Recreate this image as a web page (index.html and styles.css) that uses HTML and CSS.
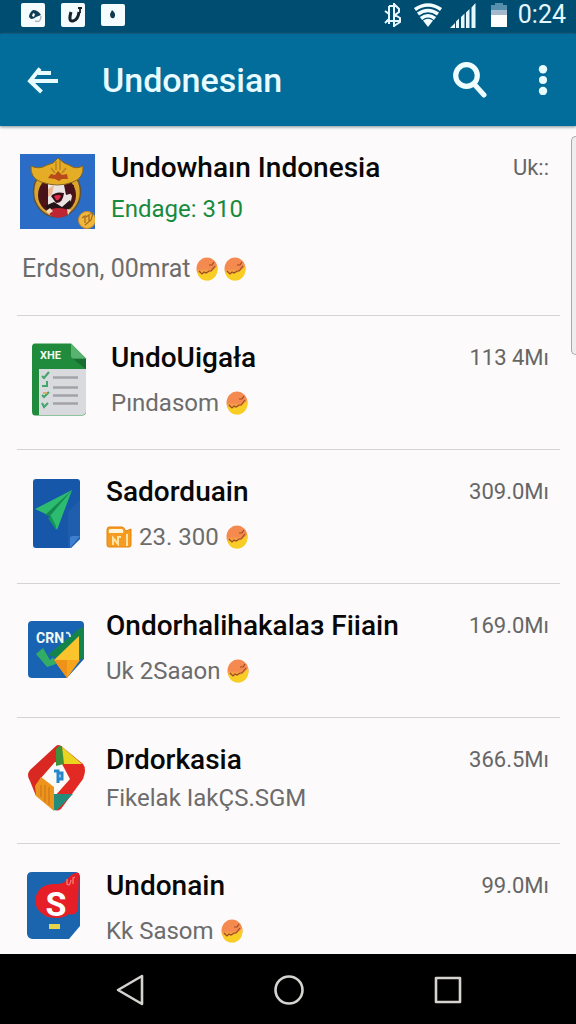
FILE: index.html
```html
<!DOCTYPE html>
<html lang="id">
<head>
<meta charset="utf-8">
<meta name="viewport" content="width=device-width, initial-scale=1">
<title>Undonesian</title>
<link rel="stylesheet" href="styles.css">
</head>
<body>
<svg class="defs" aria-hidden="true">
  <defs>
    <linearGradient id="coinFill" x1="0" y1="0" x2="0" y2="1">
      <stop offset="0.5" stop-color="#f58a50"/><stop offset="0.75" stop-color="#f9cc2c"/>
    </linearGradient>
    <symbol id="coin" viewBox="0 0 22 24">
      <ellipse cx="11" cy="12" rx="10.5" ry="11.5" fill="url(#coinFill)"/>
      <path d="M1 14Q4 20 11 17T21 9Q23 20 14 23Q3 25 1 14Z" fill="#f8ce24"/>
      <path d="M3 14l3 3 2-2 2 1 3-2 2 0 4-5M13 8l3 0 2-3" fill="none" stroke="#9a4a20" stroke-width="1.200"/>
    </symbol>
  </defs>
</svg>
<div class="screen">
  <div class="status">
    <div class="status-group notices">
      <svg width="24" height="24" viewBox="0 0 24 24"><rect width="24" height="24" rx="2" fill="#f4fcfe"/><path d="M8 14Q8 10 12 7Q17 7 20 12L15 14Q13 16 10 16Z" fill="#123d56"/><path d="M12 10l2 1-1 3-2-1z" fill="#fff"/><path d="M14 18Q20 20 20 13" fill="none" stroke="#a9b5bb" stroke-width="1.4"/></svg>
      <svg width="24" height="24" viewBox="0 0 24 24"><rect width="24" height="24" rx="2" fill="#f4fcfe"/><path d="M10 9Q7 19 12 18Q17 17 18 9" fill="none" stroke="#15222b" stroke-width="3"/><path d="M17 5h4M19 5v5" stroke="#15222b" stroke-width="1.8"/></svg>
      <svg width="24" height="24" viewBox="0 0 24 24"><rect width="24" height="22" y="1" rx="2" fill="#f4fcfe"/><path d="M11 7Q16 11 13 15Q9 16 9 11Z" fill="#103952"/></svg>
    </div>
    <div class="status-group">
      <svg width="18" height="26" viewBox="0 0 18 26"><path d="M1 9l4 3v5l-4 4M5 4v18M5 4h4M10 1v24M10 2l5 5v3l-4 3 5 3v4l-6 4M2 19h13" fill="none" stroke="#e5f8ff" stroke-width="2"/></svg>
      <svg class="wifi" width="30" height="24" viewBox="0 0 30 24"><path d="M15 24L10 17.500Q15 14 20 17.500Z" fill="#f2fdff"/><g fill="none" stroke="#f2fdff" stroke-width="3.600"><path d="M2 6.500Q15-2.500 28 6.500"/><path d="M5 11Q15 4 25 11"/><path d="M8 15.500Q15 10 22 15.500"/></g></svg>
      <svg class="signal" width="26" height="25" viewBox="0 0 26 25"><path d="M0 25L5 20v5zM6 25V18.500l3-3V25zM11 25V14l3.500-3.500V25zM16 25V9.500L19.500 6v19zM21.500 25V4.500L25.500 0v25z" fill="#e5f8ff"/></svg>
      <svg class="battery" width="16" height="24" viewBox="0 0 16 24"><path d="M4 0h8v2h4v6H0V2h4z" fill="#5790ae"/><path d="M0 7h16v5H0z" fill="#a5b9ce"/><path d="M0 12h16v12H0z" fill="#fff"/></svg>
      <span class="clock">0:24</span>
    </div>
  </div>

  <header class="appbar">
    <button class="icon-btn" aria-label="Back"><svg width="32" height="27" viewBox="0 0 32 27"><path d="M31 14H3M24 6H11M13 1.500L3 14l11.500 11" fill="none" stroke="#e8fbff" stroke-width="4"/></svg></button>
    <h1>Undonesian</h1>
    <button class="icon-btn" aria-label="Search"><svg width="34" height="36" viewBox="0 0 34 36"><circle cx="13.500" cy="13.500" r="10.800" fill="none" stroke="#effdff" stroke-width="5.200"/><path d="M21.500 22.500L31 33" stroke="#effdff" stroke-width="5" stroke-linecap="round"/></svg></button>
    <button class="icon-btn more" aria-label="More options"><svg width="10" height="30" viewBox="0 0 10 30"><g fill="#e8fbff"><circle cx="5" cy="4.300" r="4.200"/><circle cx="5" cy="15" r="4"/><circle cx="5" cy="26" r="4.200"/></g></svg></button>
  </header>

  <main>
    <div class="scroll-thumb"></div>
    <ul class="list">
      <li class="row featured">
        <svg class="art" viewBox="0 0 78 76"><rect x="3" y="1" width="75" height="75" fill="#2b6cc6"/>
          <ellipse cx="40" cy="39" rx="23.500" ry="25" fill="#d9a52b" stroke="#61513c" stroke-width="1.500"/>
          <circle cx="40" cy="42" r="19" fill="#4b1518"/>
          <path d="M31 31h16l8 12-3 14H31z" fill="#eae5e3"/><path d="M23 33h8v16l-6-4zM47 32h10l-1 8-7 2z" fill="#48121a"/><path d="M31 36l6-4-2 9-4 3z" fill="#e9b68f"/><path d="M34 43q5-5 13-3-1 10-8 10z" fill="#321015"/><path d="M37 43q5-2 7 0-2 5-5 4z" fill="#e52b4c"/><path d="M28 53l9-4 8 5 8-7 2 4-4 7H32z" fill="#251518"/><path d="M32 57q8-4 20 0l-3 6q-9 4-16-1z" fill="#bd2632"/><path d="M29 58l4-3 3 3-4 3zM50 56l4 1-3 5z" fill="#f2d8b8"/>
          <path d="M14 13q8 4 16-1l6-2 5-5 6 5 5 2q7 5 14 1 1 12-10 16-15 6-32 0-11-4-10-16z" fill="#e4ad25" stroke="#88651f"/>
          <path d="M31 25l3-4 4 1 3-4 4 4 5-1 1 5-6 0-3 2-4-2z" fill="#b84b19"/><path d="M39 8v9M43 7v10M34 15l4 5M49 15l-4 5" stroke="#b98422" stroke-width="1.500"/>
          <circle cx="70" cy="67" r="8.500" fill="#efb83c" stroke="#cb8b25"/><path d="M65 65l3-2v7m1-6l3-2v6m1-7l3-1-2 7-6 5" fill="none" stroke="#a66c20" stroke-width="1.300"/></svg>
        <div class="body">
          <div class="line"><h2>Undowhaın Indonesia</h2><span class="size">Uk::</span></div>
          <p class="sub green">Endage: 310</p>
        </div>
        <p class="sub note">Erdson, 00mrat <svg class="coin"><use href="#coin"/></svg><svg class="coin"><use href="#coin"/></svg></p>
      </li>
      <li class="row wide">
        <svg class="art" viewBox="0 0 78 76"><path d="M18 .5h36l15 15v53q0 4-4 4H18q-3 0-3-4V4q0-3.500 3-3.500z" fill="#218b3d"/><path d="M22 26h47v42q0 4-4 4H22z" fill="#d9dadd"/><path d="M54 .5l15 15H57q-3 0-3-3z" fill="#57b36f"/><path d="M56 16h13v10z" fill="#176e30"/><path d="M36 34.500h25M36 44.500h25M36 52.500h25M36 60.500h25" stroke="#a2a2aa" stroke-width="2.600"/><path d="M25 33l2 2 5-6M25 43h5v-5M25 52l2 2 5-5M25 60l2 4 4-4" fill="none" stroke="#41a56c" stroke-width="2"/><path d="M26 50h4" stroke="#d5b06b" stroke-width="2"/><text x="23" y="16" class="art-label sheet">XHE</text></svg>
        <div class="body">
          <div class="line"><h2>UndoUigała</h2><span class="size">113 4Mı</span></div>
          <p class="sub">Pındasom <svg class="coin"><use href="#coin"/></svg></p>
        </div>
      </li>
      <li class="row">
        <svg class="art" viewBox="0 0 78 76"><path d="M19 2h41q3 0 3 3v57l-9 9H19q-3 0-3-3V5q0-3 3-3z" fill="#1757a9"/><path d="M51 35l12-12v39l-9 9h-3z" fill="#2866b5" opacity=".5"/><path d="M53 71V61q0-2 3-2h7z" fill="#3f80ce"/><path d="M18 32L55 13 40 53l-7-14z" fill="#2dbb70"/><path d="M55 13L33 39l-5-1zM33 39l6 9" fill="#168a50"/><path d="M31 41l3-2 5 10v4z" fill="#12945a"/></svg>
        <div class="body">
          <div class="line"><h2>Sadorduain</h2><span class="size">309.0Mı</span></div>
          <p class="sub"><svg class="box" viewBox="0 0 26 22"><path d="M3 1h13q2 0 3 3l1 1 5-2v16q0 2-2 2H3q-2 0-2-2V4q0-3 2-3z" fill="#f49b20" stroke="#e5840d"/><path d="M4 3h12q2 1 1 4H3q-1-3 1-4z" fill="#fff3da"/><path d="M7 19v-7l5 6v-7h3M21 8v12" fill="none" stroke="#ffe2a5" stroke-width="2"/></svg> 23. 300 <svg class="coin"><use href="#coin"/></svg></p>
        </div>
      </li>
      <li class="row">
        <svg class="art" viewBox="0 0 78 76"><rect x="11" y="10" width="56" height="57" rx="4" fill="#1964b2"/><path d="M31 44L62 18l5-2v32H47z" fill="#13854a"/><path d="M67 48v20H49z" fill="#fdfafa"/><path d="M19 43l7-6 7 12 3-3 3 7-9 3z" fill="#31ad66"/><path d="M62 25v24H37z" fill="#fbc32c"/><path d="M37 49h26L50 67z" fill="#f7a51c"/><path d="M37 49h13v18z" fill="#ee9317"/><text x="19" y="32" class="art-label card">CRN</text><path d="M49 22q4-1 4 4" fill="none" stroke="#cbe7ed" stroke-width="2"/></svg>
        <div class="body">
          <div class="line"><h2>Ondorhalihakalaз Fiiain</h2><span class="size">169.0Mı</span></div>
          <p class="sub">Uk 2Saaon <svg class="coin"><use href="#coin"/></svg></p>
        </div>
      </li>
      <li class="row tight">
        <svg class="art" viewBox="0 0 78 76"><path d="M39 1L13 25q-4 5 0 11l6 15 24-31 1-19q-3-2-5 0z" fill="#d92722"/><path d="M44 1l22 18q4 5 0 15L44 64q-5 4-9-2z" fill="#e22924"/><path d="M38 17l7 2 8 15-15 17-14-18z" fill="#fdf9f7"/><path d="M44 1l21 18H46z" fill="#e9d420"/><path d="M39 4q3-4 6-3l2 18-8 2z" fill="#42913a"/><path d="M24 32l13 10v24L19 51l-1-10z" fill="#ed941d"/><path d="M24 40v12m4-12v17m4-15v18" stroke="#c57219"/><path d="M37 49h19L41 64q-2 2-4 1z" fill="#258b7a"/><path d="M37 26h4v12m0-10h4v6h-4" fill="none" stroke="#2785c9" stroke-width="3"/></svg>
        <div class="body">
          <div class="line"><h2>Drdorkasia</h2><span class="size">366.5Mı</span></div>
          <p class="sub">Fikelak IakÇS.SGM</p>
        </div>
      </li>
      <li class="row">
        <svg class="art" viewBox="0 0 78 76"><path d="M15 1h43q4 0 5 4v50L52 68H15q-5-1-5-6V6q0-5 5-5z" fill="#1b65ae"/><path d="M22 19q6-7 17-6 9 0 12-6 6-6 11-5l-1 37q-3 6-9 4-5 4-13 4-13 0-19-10-4-9 2-18z" fill="#e51f25"/><path d="M50 8v5q3 3 4-4m2 4V7l2-1" fill="none" stroke="#f58079" stroke-width="1.300"/><rect x="32" y="53" width="11" height="5" fill="#e8d44a"/><text x="39" y="45" text-anchor="middle" class="art-label letter">S</text></svg>
        <div class="body">
          <div class="line"><h2>Undonain</h2><span class="size">99.0Mı</span></div>
          <p class="sub">Kk Sasom <svg class="coin"><use href="#coin"/></svg></p>
        </div>
      </li>
    </ul>
  </main>

  <nav class="navbar" aria-label="System">
    <button class="icon-btn" aria-label="Back"><svg width="32" height="32" viewBox="0 0 32 32"><path d="M28 2v28L4 16z" class="nav-line"/></svg></button>
    <button class="icon-btn" aria-label="Home"><svg width="32" height="32" viewBox="0 0 32 32"><circle cx="16" cy="16" r="13.500" class="nav-line"/></svg></button>
    <button class="icon-btn" aria-label="Recent apps"><svg width="32" height="32" viewBox="0 0 32 32"><rect x="4" y="4" width="24" height="24" class="nav-line"/></svg></button>
  </nav>
</div>
</body>
</html>
```

FILE: styles.css
```css
* { box-sizing: border-box; }
body, h1, h2, p, ul { margin: 0; padding: 0; }
body { font-family: Roboto, "Liberation Sans", sans-serif; background: #fcfafa; }
.defs { position: absolute; width: 0; height: 0; }
.screen { min-height: 100vh; display: flex; flex-direction: column; }
svg { display: block; flex: none; }
.icon-btn { border: 0; padding: 0; background: none; display: flex; align-items: center; justify-content: center; cursor: pointer; }

.status { background: #004d72; height: 34px; padding: 0 10px 4px 21px; display: flex; align-items: center; justify-content: space-between; }
.status-group { display: flex; align-items: center; }
.notices { gap: 16px; }
.wifi { margin-left: 11px; }
.signal { margin-left: 7px; }
.battery { margin-left: 15px; }
.clock { margin-left: 11px; color: #e5f8ff; font-size: 25px; line-height: 30px; }

.appbar { background: #026d9b; height: 92px; padding: 0 28px 0 27px; display: flex; align-items: center; box-shadow: 0 1px 3px #7d8c98; z-index: 1; }
.appbar h1 { flex: 1; margin-left: 43px; color: #e8fbff; font-size: 34px; line-height: 44px; font-weight: 500; }
.more { margin-left: 51px; }

main { flex: 1; position: relative; }
.scroll-thumb { position: absolute; top: 10px; right: 0; width: 5px; height: 219px; background: #efedee; border: 1px solid #a9a7aa; border-right: 0; border-radius: 5px 0 0 5px; }
.list { list-style: none; margin: 0 16px 0 17px; }
.row { display: grid; grid-template-columns: 78px 1fr; column-gap: 11px; padding: 24px 0 30px; border-bottom: 1px solid #d6d3d4; }
.row:last-child { border-bottom: 0; padding-bottom: 7px; }
.featured, .wide { column-gap: 16px; }
.art { width: 78px; height: 76px; margin-top: 3px; }
.body { display: flex; flex-direction: column; gap: 11px; min-width: 0; }
.featured .body { gap: 7px; }
.tight { padding-bottom: 22px; }
.tight .body { gap: 4px; }
.line { display: flex; justify-content: space-between; align-items: center; padding-right: 11px; }
h2 { font-size: 28px; line-height: 36px; font-weight: 500; color: #080808; white-space: nowrap; }
.size { font-size: 22px; line-height: 36px; color: #666; white-space: nowrap; }
.sub { display: flex; align-items: center; gap: 7px; font-size: 24px; line-height: 32px; color: #6c6c6c; white-space: nowrap; }
.green { color: #168b3c; }
.note { grid-column: 1 / -1; margin: 24px 0 0 5px; gap: 6px; font-size: 25px; }
.coin { width: 22px; height: 24px; }
.box { width: 26px; height: 22px; }
.art-label { fill: #f0faf2; font-family: Roboto, sans-serif; font-weight: 700; }
.sheet { font-size: 11px; }
.card { font-size: 14px; }
.letter { font-size: 34px; fill: #fff; }

.navbar { background: #000; height: 70px; padding: 2px 112px 0 114px; display: flex; align-items: center; justify-content: space-between; }
.nav-line { fill: none; stroke: #d5d3d0; stroke-width: 2.6px; stroke-linejoin: round; }
```
